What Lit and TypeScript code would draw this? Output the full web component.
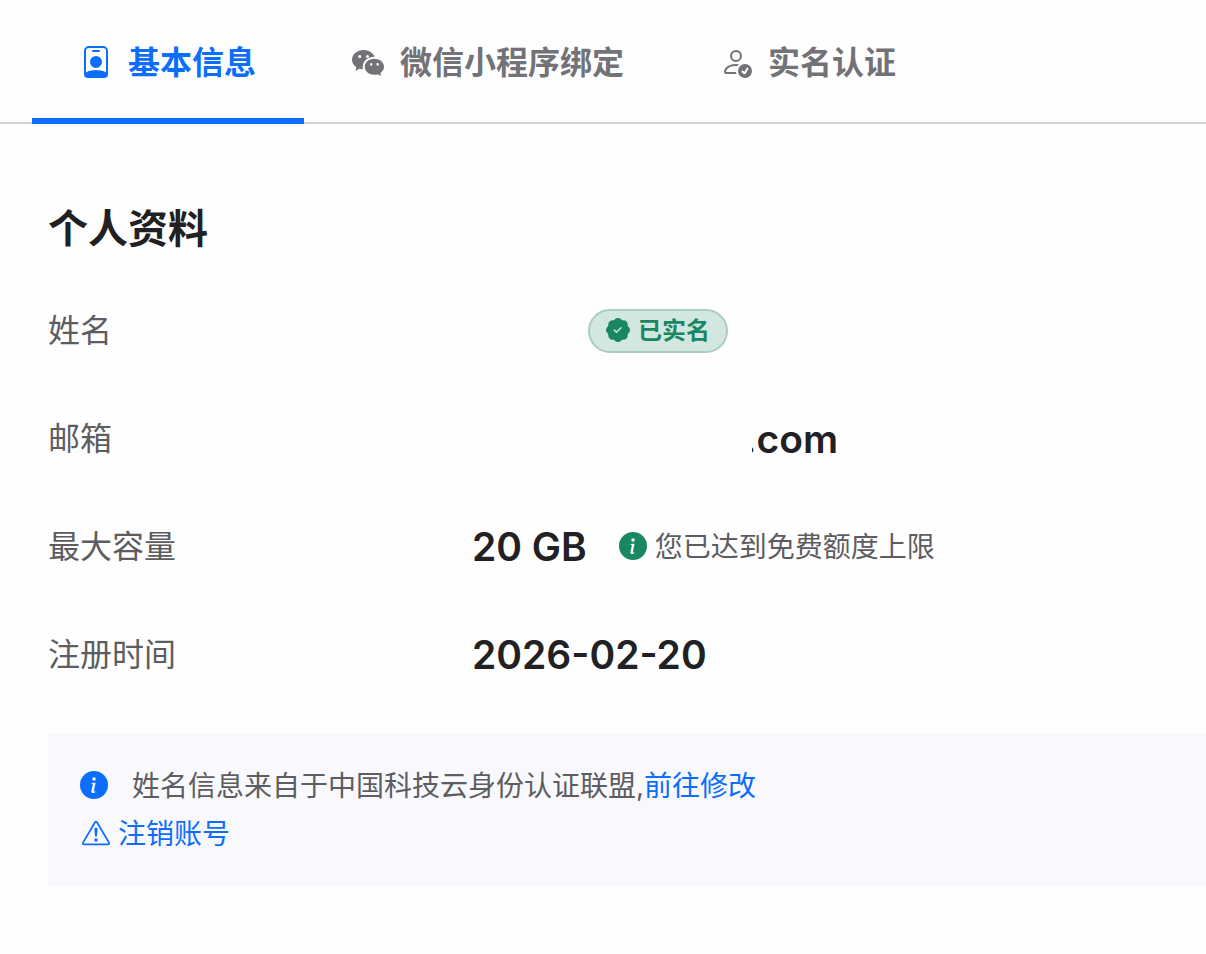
import { LitElement, html, css, svg } from "lit";
import { customElement } from "lit/decorators.js";

const icon = (size: string, shapes: unknown) =>
  html`<svg class="icon ${size}" viewBox="0 0 16 16" fill="currentColor" aria-hidden="true">${shapes}</svg>`;

const badgeIcon = svg`<path d="M6.5 2a.5.5 0 0 0 0 1h3a.5.5 0 0 0 0-1zM11 8a3 3 0 1 1-6 0 3 3 0 0 1 6 0"/><path d="M4.5 0A2.5 2.5 0 0 0 2 2.5V14a2 2 0 0 0 2 2h8a2 2 0 0 0 2-2V2.5A2.5 2.5 0 0 0 11.5 0zM3 2.5A1.5 1.5 0 0 1 4.5 1h7A1.5 1.5 0 0 1 13 2.5v10.795a4.2 4.2 0 0 0-.776-.492C11.392 12.387 10.063 12 8 12s-3.392.387-4.224.803a4.2 4.2 0 0 0-.776.492z"/>`;

const wechatIcon = svg`<path d="M11.176 14.429c-2.665 0-4.826-1.8-4.826-4.018 0-2.22 2.159-4.02 4.824-4.02S16 8.191 16 10.411c0 1.21-.65 2.301-1.666 3.036a.32.32 0 0 0-.12.366l.218.81a.6.6 0 0 1 .029.117.166.166 0 0 1-.162.162.2.2 0 0 1-.092-.03l-1.057-.61a.5.5 0 0 0-.256-.074.5.5 0 0 0-.142.021 5.7 5.7 0 0 1-1.576.22M9.064 9.542a.647.647 0 1 0 .557-1 .645.645 0 0 0-.646.647.6.6 0 0 0 .09.353Zm3.232.001a.646.646 0 1 0 .546-1 .645.645 0 0 0-.644.644.63.63 0 0 0 .098.356"/><path d="M0 6.826c0 1.455.781 2.765 2.001 3.656a.385.385 0 0 1 .143.439l-.161.6-.1.373a.5.5 0 0 0-.032.14.19.19 0 0 0 .193.193q.06 0 .111-.029l1.268-.733a.6.6 0 0 1 .308-.088q.088 0 .171.025a6.8 6.8 0 0 0 1.625.26 4.5 4.5 0 0 1-.177-1.251c0-2.936 2.785-5.02 5.824-5.02l.15.002C10.587 3.429 8.392 2 5.796 2 2.596 2 0 4.16 0 6.826m4.632-1.555a.77.77 0 1 1-1.54 0 .77.77 0 0 1 1.54 0m3.875 0a.77.77 0 1 1-1.54 0 .77.77 0 0 1 1.54 0"/>`;

const personCheckIcon = svg`<path d="M12.5 16a3.5 3.5 0 1 0 0-7 3.5 3.5 0 0 0 0 7m1.679-4.493-1.335 2.226a.75.75 0 0 1-1.174.144l-.774-.773a.5.5 0 0 1 .708-.708l.547.548 1.17-1.951a.5.5 0 1 1 .858.514M11 5a3 3 0 1 1-6 0 3 3 0 0 1 6 0M8 7a2 2 0 1 0 0-4 2 2 0 0 0 0 4"/><path d="M8.256 14a4.5 4.5 0 0 1-.229-1.004H3c.001-.246.154-.986.832-1.664C4.484 10.68 5.711 10 8 10q.39 0 .74.025c.226-.341.496-.65.804-.918Q8.844 9.002 8 9c-5 0-6 3-6 4s1 1 1 1z"/>`;

const patchCheckIcon = svg`<path d="M10.067.87a2.89 2.89 0 0 0-4.134 0l-.622.638-.89-.011a2.89 2.89 0 0 0-2.924 2.924l.01.89-.636.622a2.89 2.89 0 0 0 0 4.134l.637.622-.011.89a2.89 2.89 0 0 0 2.924 2.924l.89-.01.622.636a2.89 2.89 0 0 0 4.134 0l.622-.637.89.011a2.89 2.89 0 0 0 2.924-2.924l-.01-.89.636-.622a2.89 2.89 0 0 0 0-4.134l-.637-.622.011-.89a2.89 2.89 0 0 0-2.924-2.924l-.89.01zm.287 5.984-3 3a.5.5 0 0 1-.708 0l-1.5-1.5a.5.5 0 1 1 .708-.708L7 8.793l2.646-2.647a.5.5 0 0 1 .708.708"/>`;

const infoIcon = svg`<path d="M8 16A8 8 0 1 0 8 0a8 8 0 0 0 0 16m.93-9.412-1 4.705c-.07.34.029.533.304.533.194 0 .487-.07.686-.246l-.088.416c-.287.346-.92.598-1.465.598-.703 0-1.002-.422-.808-1.319l.738-3.468c.064-.293.006-.399-.287-.47l-.451-.081.082-.381 2.29-.287zM8 5.5a1 1 0 1 1 0-2 1 1 0 0 1 0 2"/>`;

const warningIcon = svg`<path d="M7.938 2.016A.13.13 0 0 1 8.002 2a.13.13 0 0 1 .063.016.15.15 0 0 1 .054.057l6.857 11.667c.036.06.035.124.002.183a.2.2 0 0 1-.054.06.1.1 0 0 1-.066.017H1.146a.1.1 0 0 1-.066-.017.2.2 0 0 1-.054-.06.18.18 0 0 1 .002-.183L7.884 2.073a.15.15 0 0 1 .054-.057m1.044-.45a1.13 1.13 0 0 0-1.96 0L.165 13.233c-.457.778.091 1.767.98 1.767h13.713c.889 0 1.438-.99.98-1.767z"/><path d="M7.002 12a1 1 0 1 1 2 0 1 1 0 0 1-2 0M7.1 5.995a.905.905 0 1 1 1.8 0l-.35 3.507a.552.552 0 0 1-1.1 0z"/>`;

@customElement("app-root")
export class AppRoot extends LitElement {
  static styles = css`
    :host {
      display: block;
      min-height: 100vh;
      background: #fefefe;
      color: #212124;
      font-family: Inter, "Noto Sans CJK SC", sans-serif;
      font-size: 32px;
      line-height: 48px;
    }
    .icon { display: block; flex: none; margin-bottom: 2px; }
    .lg { width: 32px; height: 32px; }
    .md { width: 28px; height: 28px; }
    .sm { width: 24px; height: 24px; }
    .tabs {
      display: flex;
      padding: 0 32px;
      box-shadow: inset 0 -2px #d2d2d5;
    }
    .tab {
      display: flex;
      align-items: center;
      gap: 16px;
      padding: 39px 48px 31px;
      border: 0;
      border-bottom: 6px solid transparent;
      background: none;
      color: #727277;
      font: inherit;
      font-weight: 600;
      white-space: nowrap;
      cursor: pointer;
    }
    .active { color: #0d6efd; border-bottom-color: #0d6efd; }
    .profile { padding: 77px 0 68px 48px; }
    h1 { margin: 0; font-size: 40px; line-height: 56px; font-weight: 600; }
    dl { margin: 0; padding: 20px 0 24px; }
    .row {
      display: grid;
      grid-template-columns: 424px 1fr;
      align-items: center;
      min-height: 108px;
    }
    dt { color: #5d5d61; }
    dd {
      display: flex;
      align-items: center;
      margin: 0;
      font-size: 39px;
      font-weight: 600;
    }
    .pill {
      display: flex;
      align-items: center;
      gap: 8px;
      margin-left: 116px;
      padding: 4px 16px;
      border: 2px solid #a9cdbf;
      border-radius: 24px;
      background: #d1e7df;
      color: #198764;
      font-size: 24px;
      line-height: 32px;
    }
    .masked { margin-left: 272px; clip-path: inset(0 0 0 8px); }
    .quota {
      display: flex;
      align-items: center;
      gap: 8px;
      margin-left: 32px;
      color: #5d5d61;
      font-size: 28px;
      font-weight: 400;
    }
    .success { color: #198764; display: flex; }
    .notice {
      padding: 29px 32px;
      background: #f8f8fd;
      color: #5d5d61;
      font-size: 28px;
    }
    .line { display: flex; align-items: center; }
    .info { color: #0d6efd; display: flex; margin-right: 24px; }
    a { color: #0d6efd; text-decoration: none; }
    .cancel { display: flex; align-items: center; gap: 8px; padding-left: 2px; }
  `;

  render() {
    return html`
      <nav class="tabs" role="tablist">
        <button class="tab active" role="tab" aria-selected="true">${icon("lg", badgeIcon)}基本信息</button>
        <button class="tab" role="tab" aria-selected="false">${icon("lg", wechatIcon)}微信小程序绑定</button>
        <button class="tab" role="tab" aria-selected="false">${icon("lg", personCheckIcon)}实名认证</button>
      </nav>
      <main class="profile">
        <h1>个人资料</h1>
        <dl>
          <div class="row">
            <dt>姓名</dt>
            <dd><span class="pill">${icon("sm", patchCheckIcon)}已实名</span></dd>
          </div>
          <div class="row">
            <dt>邮箱</dt>
            <dd><span class="masked">.com</span></dd>
          </div>
          <div class="row">
            <dt>最大容量</dt>
            <dd>20 GB<span class="quota"><span class="success">${icon("md", infoIcon)}</span>您已达到免费额度上限</span></dd>
          </div>
          <div class="row">
            <dt>注册时间</dt>
            <dd>2026-02-20</dd>
          </div>
        </dl>
        <section class="notice">
          <div class="line">
            <span class="info">${icon("md", infoIcon)}</span>
            <span>姓名信息来自于中国科技云身份认证联盟,<a href="#edit">前往修改</a></span>
          </div>
          <div class="line">
            <a class="cancel" href="#cancel">${icon("md", warningIcon)}注销账号</a>
          </div>
        </section>
      </main>
    `;
  }
}
